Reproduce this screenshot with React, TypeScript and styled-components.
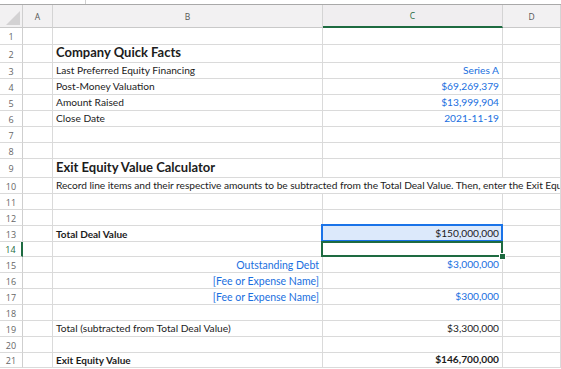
import React from 'react';
import styled, { createGlobalStyle } from 'styled-components';

const Global = createGlobalStyle`
  html, body { margin: 0; padding: 0; background: #fff; }
  body { font-family: Lato, "Open Sans", sans-serif; }
`;

const COLS = '23px 30px 270px 180px 58px 1fr';
const GRID = '#dadada';
const BLUE = '#1a6fe0';
const GREEN = '#1e6b41';

const Page = styled.div`
  width: 561px;
  height: 369px;
  overflow: hidden;
  display: flex;
  flex-direction: column;
  background: #fff;
`;

const TopStrip = styled.div`
  flex: none;
  height: 5px;
  box-sizing: border-box;
  border-bottom: 1px solid #a9a9a9;
  display: flex;
`;

const StripBox = styled.div`
  width: 85px;
  border-right: 1px solid #d0d0d0;
`;

const Row = styled.div<{ $h: number }>`
  flex: none;
  display: grid;
  grid-template-columns: ${COLS};
  height: ${(p) => p.$h}px;
`;

const Corner = styled.div`
  background: #f2f1f2;
  border-right: 1px solid #cfcfcf;
  border-bottom: 1px solid #c9c9c9;
  display: flex;
  align-items: flex-end;
  justify-content: flex-end;
  padding: 0 2px 2px 0;
`;

const ColHead = styled.div<{ $active?: boolean }>`
  background: ${(p) => (p.$active ? '#f0eef0' : '#f2f1f2')};
  border-right: 1px solid #d4d4d4;
  border-bottom: ${(p) => (p.$active ? `2px solid ${GREEN}` : '1px solid #c9c9c9')};
  font-family: "Open Sans", sans-serif;
  font-size: 8.5px;
  color: ${(p) => (p.$active ? GREEN : '#555')};
  display: flex;
  align-items: center;
  justify-content: center;
`;

const RowNum = styled.div<{ $active?: boolean }>`
  box-sizing: border-box;
  border-right: ${(p) => (p.$active ? `2px solid ${GREEN}` : '1px solid #cfcfcf')};
  border-bottom: 1px solid ${GRID};
  font-family: "Open Sans", sans-serif;
  font-size: 9px;
  padding-top: 1px;
  color: ${(p) => (p.$active ? GREEN : '#666')};
  display: flex;
  align-items: center;
  justify-content: center;
`;

type Sel = 'blue' | 'green' | undefined;

const Cell = styled.div<{
  $align?: 'left' | 'right';
  $bold?: boolean;
  $blue?: boolean;
  $size?: number;
  $span?: number;
  $sel?: Sel;
  $tight?: boolean;
}>`
  position: relative;
  box-sizing: border-box;
  min-width: 0;
  grid-column: span ${(p) => p.$span ?? 1};
  border-right: 1px solid ${GRID};
  border-bottom: 1px solid ${GRID};
  padding: 0 3px 0 3px;
  display: flex;
  align-items: flex-end;
  justify-content: ${(p) => (p.$align === 'right' ? 'flex-end' : 'flex-start')};
  white-space: nowrap;
  overflow: ${(p) => (p.$sel ? 'visible' : 'hidden')};
  font-size: ${(p) => p.$size ?? 10.2}px;
  letter-spacing: ${(p) => (p.$tight ? '-0.05px' : 'normal')};
  line-height: 1.35;
  font-weight: ${(p) => (p.$bold ? 700 : 400)};
  color: ${(p) => (p.$blue ? BLUE : '#1c1c1c')};
  background: ${(p) => (p.$sel === 'blue' ? '#dce9fb' : 'transparent')};
  ${(p) =>
    p.$sel === 'blue'
      ? `&::after { content: ''; position: absolute; left: -2px; top: -2px; right: -1px; bottom: -1px; border: 2px solid #1a73e8; pointer-events: none; z-index: 2; }`
      : ''}
  ${(p) =>
    p.$sel === 'green'
      ? `&::after { content: ''; position: absolute; left: -2px; top: -1px; right: -1px; bottom: -1px; border: 2px solid ${GREEN}; pointer-events: none; z-index: 2; }`
      : ''}
`;

const Handle = styled.span`
  position: absolute;
  right: -4px;
  bottom: -4px;
  width: 5px;
  height: 5px;
  background: ${GREEN};
  border: 1px solid #fff;
  z-index: 3;
`;

interface CellData {
  text?: string;
  align?: 'left' | 'right';
  bold?: boolean;
  blue?: boolean;
  size?: number;
  span?: number;
  sel?: Sel;
  tight?: boolean;
}

interface RowData {
  h: number;
  a?: CellData;
  b?: CellData;
  c?: CellData;
  d?: CellData;
  wide?: CellData;
}

const rows: RowData[] = [
  { h: 17 },
  { h: 18, b: { text: 'Company Quick Facts', bold: true, size: 13 } },
  { h: 16, b: { text: 'Last Preferred Equity Financing' }, c: { text: 'Series A', blue: true, align: 'right' } },
  { h: 16, b: { text: 'Post-Money Valuation' }, c: { text: '$69,269,379', blue: true, align: 'right' } },
  { h: 16, b: { text: 'Amount Raised' }, c: { text: '$13,999,904', blue: true, align: 'right' } },
  { h: 16, b: { text: 'Close Date' }, c: { text: '2021-11-19', blue: true, align: 'right' } },
  { h: 16 },
  { h: 16 },
  { h: 19, b: { text: 'Exit Equity Value Calculator', bold: true, size: 13 } },
  {
    h: 16,
    wide: {
      text: 'Record line items and their respective amounts to be subtracted from the Total Deal Value. Then, enter the Exit Equity Value',
      span: 4,
      tight: true,
    },
  },
  { h: 16 },
  { h: 16 },
  { h: 16, b: { text: 'Total Deal Value', bold: true, size: 10 }, c: { text: '$150,000,000', align: 'right', sel: 'blue' } },
  { h: 15, c: { sel: 'green' } },
  { h: 16, b: { text: 'Outstanding Debt', blue: true, align: 'right', size: 10.5 }, c: { text: '$3,000,000', blue: true, align: 'right' } },
  { h: 16, b: { text: '[Fee or Expense Name]', blue: true, align: 'right', size: 10.5 } },
  { h: 16, b: { text: '[Fee or Expense Name]', blue: true, align: 'right', size: 10.5 }, c: { text: '$300,000', blue: true, align: 'right' } },
  { h: 16 },
  { h: 16, b: { text: 'Total (subtracted from Total Deal Value)' }, c: { text: '$3,300,000', align: 'right' } },
  { h: 16 },
  { h: 15, b: { text: 'Exit Equity Value', bold: true, size: 10 }, c: { text: '$146,700,000', bold: true, align: 'right' } },
];

const renderCell = (d: CellData | undefined, key: string) => (
  <Cell
    key={key}
    $align={d?.align}
    $bold={d?.bold}
    $blue={d?.blue}
    $size={d?.size}
    $span={d?.span}
    $sel={d?.sel}
    $tight={d?.tight}
  >
    {d?.text}
    {d?.sel === 'green' && <Handle />}
  </Cell>
);

export default function App() {
  return (
    <Page>
      <Global />
      <TopStrip>
        <StripBox />
      </TopStrip>
      <Row $h={23}>
        <Corner>
          <svg width="14" height="14" viewBox="0 0 14 14">
            <polygon points="14,0 14,14 0,14" fill="#d3d2d3" />
          </svg>
        </Corner>
        <ColHead>A</ColHead>
        <ColHead>B</ColHead>
        <ColHead $active>C</ColHead>
        <ColHead>D</ColHead>
        <ColHead />
      </Row>
      {rows.map((r, i) => (
        <Row key={i} $h={r.h}>
          <RowNum $active={i === 13}>{i + 1}</RowNum>
          {renderCell(r.a, 'a')}
          {r.wide ? (
            renderCell(r.wide, 'w')
          ) : (
            <>
              {renderCell(r.b, 'b')}
              {renderCell(r.c, 'c')}
              {renderCell(r.d, 'd')}
              {renderCell(undefined, 'e')}
            </>
          )}
        </Row>
      ))}
    </Page>
  );
}
